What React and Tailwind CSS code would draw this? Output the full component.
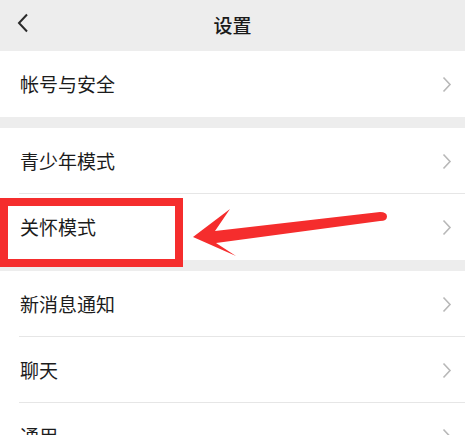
import React from "react";

const Chevron = () => (
  <svg width="10" height="17" viewBox="0 0 10 17" className="shrink-0">
    <path d="M1.5 1.5 L8 8.5 L1.5 15.5" fill="none" stroke="#b8b8b8" strokeWidth="1.6" />
  </svg>
);

const Row = ({ label, divider }) => (
  <div className="relative flex h-[66px] items-center justify-between bg-white pl-[20px] pr-[13px]">
    <span className="text-[19px] text-[#1c1c1c]">{label}</span>
    <Chevron />
    {divider && <div className="absolute bottom-0 left-[19px] right-0 h-px bg-[#e6e6e6]" />}
  </div>
);

export default function App() {
  return (
    <div
      className="relative h-[435px] w-[465px] overflow-hidden bg-[#ededed]"
      style={{ fontFamily: '"Noto Sans CJK SC", "Noto Sans", sans-serif' }}
    >
      <div className="relative flex h-[51px] items-center justify-center">
        <svg width="12" height="20" viewBox="0 0 12 20" className="absolute left-[17px] top-[13px]">
          <path d="M10 1.5 L2 10 L10 18.5" fill="none" stroke="#2a2a2a" strokeWidth="2" />
        </svg>
        <span className="text-[19px] font-medium text-[#1a1a1a]">设置</span>
      </div>
      <Row label="帐号与安全" />
      <div className="h-[11px]" />
      <Row label="青少年模式" divider />
      <Row label="关怀模式" />
      <div className="h-[11px]" />
      <Row label="新消息通知" divider />
      <Row label="聊天" divider />
      <Row label="通用" />

      <div className="absolute left-0 top-[198px] h-[69px] w-[183px] border-[8px] border-[#f52d2d]" />
      <svg className="absolute left-0 top-0" width="465" height="435" viewBox="0 0 465 435">
        <path
          d="M193 237 L230 209 L215 231 L380 212 Q387 212 387 216.5 Q387 221 380 221 L216 243 L236 256 Z"
          fill="#f52d2d"
        />
      </svg>
    </div>
  );
}
